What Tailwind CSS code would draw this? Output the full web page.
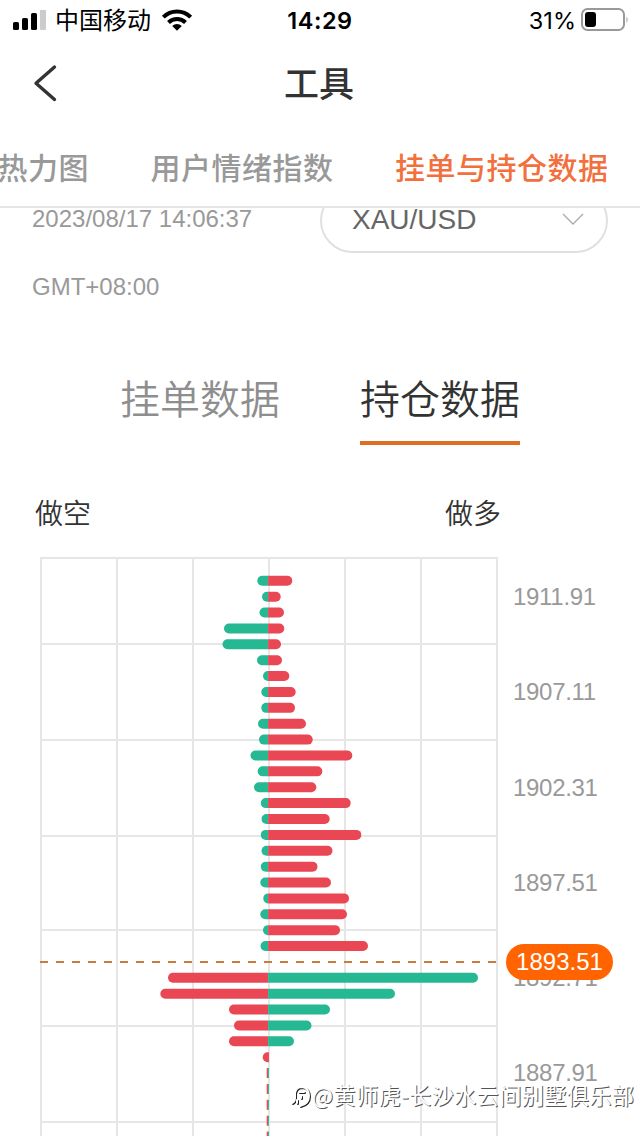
<!DOCTYPE html>
<html lang="zh-CN">
<head>
<meta charset="utf-8">
<title>工具</title>
<script src="https://cdn.jsdelivr.net/npm/@tailwindcss/browser@4"></script>
</head>
<body class="relative flex h-[1136px] w-[640px] flex-col overflow-hidden bg-white font-['Liberation_Sans','Noto_Sans_CJK_SC',sans-serif] whitespace-nowrap text-[#333]">

<header class="relative z-10 h-[208px] shrink-0 border-b-2 border-[#e6e6e6] bg-white">
  <!-- status bar -->
  <div class="grid h-10 grid-cols-3 items-center font-[Inter,'Noto_Sans_CJK_SC',sans-serif] text-black">
    <div class="flex items-center pl-[13px]">
      <svg class="h-5 w-[34px]" viewBox="0 0 34 20">
        <rect x="0" y="12" width="6" height="8" rx="1.6"/>
        <rect x="9" y="8" width="6" height="12" rx="1.6"/>
        <rect x="18" y="3" width="6" height="17" rx="1.6"/>
        <rect x="27" y="-.5" width="6" height="20.5" rx="1" fill="#ccc"/>
      </svg>
      <span class="ml-2 pt-0.5 text-2xl leading-[38px]">中国移动</span>
      <svg class="ml-2.5 h-[23px] w-[32px]" viewBox="0 0 32 23" fill="none" stroke="#000" stroke-width="4">
        <path d="M2.3 8.2a19.3 19.3 0 0 1 27.4 0"/>
        <path d="M7.5 13.5a12 12 0 0 1 17 0"/>
        <path d="M16 21.8 11.2 17.1a6.8 6.8 0 0 1 9.6 0Z" fill="#000" stroke="none"/>
      </svg>
    </div>
    <div class="pt-0.5 text-center text-[23.5px] font-semibold tracking-[0.5px]">14:29</div>
    <div class="flex items-center justify-end pr-[11px]">
      <span class="pt-0.5 text-[23.5px]">31%</span>
      <svg class="ml-[5px] h-6 w-12" viewBox="0 0 48 24">
        <rect x="1" y="1" width="42" height="21" rx="5.5" fill="none" stroke="#999" stroke-width="2"/>
        <rect x="4" y="4" width="11" height="15" rx="3"/>
        <path d="M45.5 8.5q2.2 3 0 6.5Z" fill="#999"/>
      </svg>
    </div>
  </div>
  <!-- title bar -->
  <div class="grid h-[88px] grid-cols-3 items-center">
    <svg class="ml-8 h-10 w-7" viewBox="0 0 28 40" fill="none" stroke="#333" stroke-width="3.4" stroke-linecap="round" stroke-linejoin="round"><path d="M22.5 3 4 19.2 22.5 35.5"/></svg>
    <h1 class="-ml-0.5 pt-[3px] text-center text-[35px] font-medium">工具</h1>
  </div>
  <!-- tabs -->
  <nav class="flex h-[78px] items-center gap-[61.5px] pt-[3px] text-[30px] leading-[75px] font-medium tracking-[0.5px] text-[#999]">
    <span class="-ml-[2.5px]">热力图</span>
    <span>用户情绪指数</span>
    <span class="text-[#f2703e]">挂单与持仓数据</span>
  </nav>
</header>

<main class="-mt-5 flex flex-col">
  <section class="flex h-[148px] justify-between px-8">
    <div class="-mt-[3px] text-2xl leading-[68px] text-[#999]">
      <p>2023/08/17 14:06:37</p>
      <p>GMT+08:00</p>
    </div>
    <div class="flex h-[65px] w-[288px] items-center justify-between rounded-full border-2 border-[#e0e0e0] pr-[22px] pl-[30px] text-[28px] text-[#666]">
      <span class="pb-[2px]">XAU/USD</span>
      <svg class="-mt-1 h-3 w-[22px]" viewBox="0 0 22 12" fill="none" stroke="#aaa" stroke-width="1.3"><path d="m1 1 10 10L21 1"/></svg>
    </div>
  </section>

  <div class="mt-[23px] flex justify-center gap-20 text-[40px] leading-[82px] font-[350]">
    <span class="h-[86px] text-[#8e8e8e]">挂单数据</span>
    <span class="h-[86px] border-b-4 border-[#dd6f22]">持仓数据</span>
  </div>

  <div class="mt-[47px] flex h-[66px] w-[501px] justify-between pl-[35px] text-[28px] leading-[46px] font-[350]">
    <span>做空</span><span>做多</span>
  </div>

  <section class="flex h-[578px]">
    <svg id="chart" class="h-[578px] w-[504px] shrink-0 overflow-visible" viewBox="0 558 504 578">
      <path d="M41 557V1136M117 557V1136M193 557V1136M269 557V1136M345 557V1136M421 557V1136M497 557V1136M40 558H498M40 644H498M40 740H498M40 836H498M40 930H498M40 1026H498M40 1122H498" fill="none" stroke="#e6e6e6" stroke-width="2"/>
      <g id="bars"></g>
      <path d="M40 962H497" stroke="#c97c3c" stroke-width="2" stroke-dasharray="8 8"/>
    </svg>
    <div class="flex flex-col pt-4 pl-[9px] text-2xl tracking-[-0.3px] text-[#999]">
      <span class="h-[95.3px] shrink-0 leading-[46px]">1911.91</span>
      <span class="h-[95.3px] shrink-0 leading-[46px]">1907.11</span>
      <span class="h-[95.3px] shrink-0 leading-[46px]">1902.31</span>
      <span class="h-[95.3px] shrink-0 leading-[46px]">1897.51</span>
      <span class="relative h-[95.3px] shrink-0 leading-[46px]">1892.71
        <b class="absolute -top-[11px] -left-[7px] h-[36px] w-[107px] rounded-full bg-[#ff6400] text-center leading-[36px] font-normal tracking-normal text-white">1893.51</b>
      </span>
      <span class="h-[95.3px] shrink-0 leading-[46px]">1887.91</span>
    </div>
  </section>
</main>

<!-- watermark -->
<div class="absolute top-[1078px] left-[291px] z-20 flex items-center text-[22.2px] leading-8 text-white [text-shadow:1px_1px_0_#555]">
  <svg class="mt-1 mr-px h-7 w-5 drop-shadow-[1px_1px_0_#222]" viewBox="0 0 20 28" fill="none" stroke="#fff" stroke-width="2" stroke-linecap="round"><path d="M1 21q3-1 3-5V11q1-6 7-6 7 1 7 9 0 8-9 10M8 10h5M10 14v2M6 18v3"/></svg>
  <span class="font-['Noto_Sans_CJK_SC',sans-serif] tracking-[0.35px]">@黄师虎-长沙水云间别墅俱乐部</span>
</div>

<script>
  // [left end, right end] of each price level, top to bottom
  const rows = [[257.3,292.3],[262,280.7],[259.5,284],[224,284.3],[222.5,281],[257,282],[263,289.3],[261.3,295.7],[261.3,295],[258,306],[259,312.7],[250.5,352.3],[257.7,322.3],[254,316.3],[260.8,350.7],[261.5,329.7],[260.8,361.3],[261.5,332.5],[260.8,317.5],[260.3,331],[263.3,349],[260.3,347],[263,340],[260.5,368],null,[168,478],[160.3,395],[229,330],[234,311.5],[229,294],[262.7,269],[266.7,269],[266.7,269],[266.7,269],[266.7,269],[266.7,269]];
  const green = '#25b893', red = '#e94753', mid = 268.1;
  const bar = (end, y, fill) => {
    const w = Math.abs(end - mid), r = Math.min(5, w), s = end < mid ? 1 : -1;
    const d = w < 2
      ? `M${mid} ${y - 5}H${end}v10H${mid}Z`
      : `M${mid} ${y - 5}H${end + s * r}A${r} 5 0 0 ${s > 0 ? 0 : 1} ${end + s * r} ${y + 5}H${mid}Z`;
    return `<path d="${d}" fill="${fill}"/>`;
  };
  document.getElementById('bars').innerHTML = rows.map((row, i) => {
    if (!row) return '';
    const y = 580.8 + i * 15.88, above = i < 24;
    const right = i === 30 ? red : above ? red : green;
    return bar(row[0], y, above ? green : red) + bar(row[1], y, right);
  }).join('');
</script>
</body>
</html>
